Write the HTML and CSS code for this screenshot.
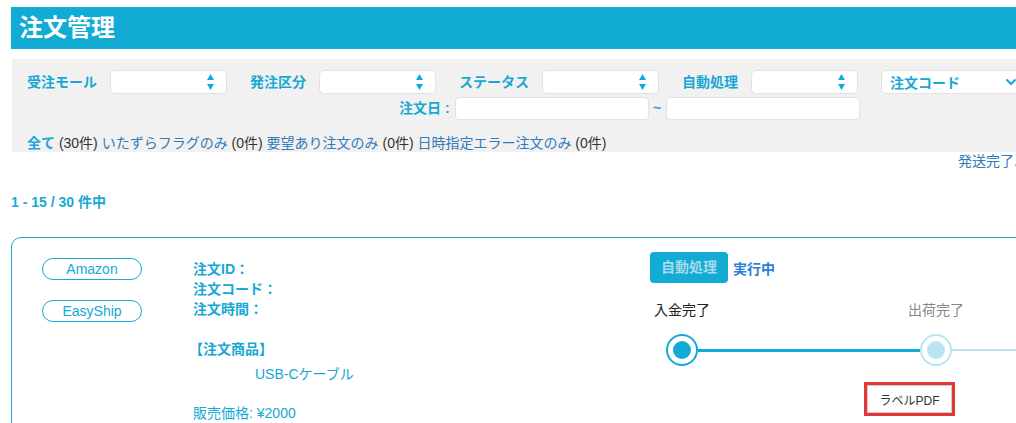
FILE: index.html
```html
<!DOCTYPE html>
<html lang="ja">
<head>
    <meta charset="UTF-8">
    <meta name="viewport" content="width=device-width, initial-scale=1.0">
    <title>注文管理</title>
    <link rel="stylesheet" href="styles.css">
</head>
<body>
    <div class="page">
        <header class="page-header">
            <h1>注文管理</h1>
        </header>

        <section class="filter-panel">
            <div class="filter-row">
                <div class="filter-group">
                    <span class="filter-label">受注モール</span>
                    <div class="select-box">
                        <svg class="updown" width="7" height="16" viewBox="0 0 7 16"><path d="M3.5 0 L7 6 L0 6 Z M3.5 16 L7 10 L0 10 Z" fill="#12abd4"/></svg>
                    </div>
                </div>
                <div class="filter-group">
                    <span class="filter-label">発注区分</span>
                    <div class="select-box">
                        <svg class="updown" width="7" height="16" viewBox="0 0 7 16"><path d="M3.5 0 L7 6 L0 6 Z M3.5 16 L7 10 L0 10 Z" fill="#12abd4"/></svg>
                    </div>
                </div>
                <div class="filter-group">
                    <span class="filter-label">ステータス</span>
                    <div class="select-box">
                        <svg class="updown" width="7" height="16" viewBox="0 0 7 16"><path d="M3.5 0 L7 6 L0 6 Z M3.5 16 L7 10 L0 10 Z" fill="#12abd4"/></svg>
                    </div>
                </div>
                <div class="filter-group">
                    <span class="filter-label">自動処理</span>
                    <div class="select-box narrow">
                        <svg class="updown" width="7" height="16" viewBox="0 0 7 16"><path d="M3.5 0 L7 6 L0 6 Z M3.5 16 L7 10 L0 10 Z" fill="#12abd4"/></svg>
                    </div>
                </div>
                <div class="select-box code-select">
                    <span>注文コード</span>
                    <svg width="12" height="8" viewBox="0 0 12 8"><path d="M1.5 1.5 L6 6 L10.5 1.5" fill="none" stroke="#12abd4" stroke-width="2"/></svg>
                </div>
            </div>

            <div class="date-row">
                <span class="filter-label">注文日 :</span>
                <div class="text-box"></div>
                <span class="tilde">~</span>
                <div class="text-box"></div>
            </div>

            <div class="quick-filters">
                <a class="active">全て</a> (30件)
                <a>いたずらフラグのみ</a> (0件)
                <a>要望あり注文のみ</a> (0件)
                <a>日時指定エラー注文のみ</a> (0件)
            </div>
        </section>

        <div class="bulk-row">
            <a>発送完了...</a>
        </div>

        <div class="result-count">1 - 15 / 30 件中</div>

        <div class="order-card">
            <div class="card-tags">
                <span class="pill">Amazon</span>
                <span class="pill">EasyShip</span>
            </div>

            <div class="card-info">
                <div class="info-line">注文ID：</div>
                <div class="info-line">注文コード：</div>
                <div class="info-line">注文時間：</div>
                <div class="items-title">【注文商品】</div>
                <div class="item-name">USB-Cケーブル</div>
                <div class="price">販売価格: ¥2000</div>
            </div>

            <div class="card-status">
                <div class="auto-row">
                    <span class="auto-badge">自動処理</span>
                    <span class="auto-state">実行中</span>
                </div>
                <div class="step-labels">
                    <span class="step-label done">入金完了</span>
                    <span class="step-label">出荷完了</span>
                </div>
                <div class="step-track">
                    <span class="step-dot done"></span>
                    <span class="step-line done"></span>
                    <span class="step-dot"></span>
                    <span class="step-line"></span>
                </div>
                <div class="label-row">
                    <span class="label-frame"><button class="label-btn">ラベルPDF</button></span>
                </div>
            </div>
        </div>
    </div>
</body>
</html>
```

FILE: styles.css
```css
* {
    box-sizing: border-box;
    margin: 0;
    padding: 0;
}

body {
    font-family: "Liberation Sans", "Noto Sans CJK JP", sans-serif;
    font-size: 14px;
    color: #333;
    background-color: #fff;
    overflow: hidden;
}

a {
    color: #337ab7;
    cursor: pointer;
}

.page {
    width: 1090px;
    padding: 7px 0 0 11px;
}

.page-header {
    height: 42px;
    background-color: #12abd4;
    padding-left: 8px;
}

.page-header h1 {
    color: #fff;
    font-size: 24px;
    line-height: 42px;
    font-weight: bold;
}

/* filters */
.filter-panel {
    margin: 10px 0 0 1px;
    height: 93px;
    background-color: #f1f1f1;
    padding: 11px 0 0 15px;
}

.filter-row {
    display: flex;
    align-items: center;
    gap: 23px;
}

.filter-group {
    display: flex;
    align-items: center;
}

.filter-label {
    color: #17a8d4;
    font-weight: bold;
    margin-right: 13px;
    line-height: 24px;
}

.select-box {
    width: 117px;
    height: 24px;
    background-color: #fff;
    border: 1px solid #e2e2e2;
    border-radius: 5px;
    display: flex;
    align-items: center;
    justify-content: flex-end;
    padding-right: 12px;
}

.select-box.narrow {
    width: 107px;
}

.code-select {
    width: 145px;
    justify-content: space-between;
    padding: 0 8px;
    color: #17a8d4;
    font-weight: bold;
}

.date-row {
    display: flex;
    align-items: center;
    margin: 2px 0 0 372px;
}

.date-row .filter-label {
    margin-right: 5px;
}

.text-box {
    width: 194px;
    height: 23px;
    background-color: #fff;
    border: 1px solid #e2e2e2;
    border-radius: 4px;
}

.tilde {
    color: #17a8d4;
    font-weight: bold;
    width: 17px;
    text-align: center;
}

.quick-filters {
    margin-top: 14px;
    line-height: 18px;
}

.quick-filters .active {
    color: #17a8d4;
    font-weight: bold;
}

.bulk-row {
    padding-left: 947px;
    line-height: 18px;
    white-space: nowrap;
}

.result-count {
    margin-top: 23px;
    color: #17a8d4;
    font-weight: bold;
    font-size: 14px;
    line-height: 18px;
}

/* order card */
.order-card {
    margin-top: 26px;
    height: 220px;
    border: 1px solid #17a8d4;
    border-radius: 10px;
    display: flex;
    padding: 14px 0 0 30px;
}

.card-tags {
    width: 151px;
    padding-top: 6px;
    display: flex;
    flex-direction: column;
    align-items: flex-start;
    gap: 20px;
}

.pill {
    width: 100px;
    height: 22px;
    border: 1px solid #17a8d4;
    border-radius: 11px;
    color: #17a8d4;
    text-align: center;
    line-height: 20px;
    font-size: 14px;
}

.card-info {
    width: 457px;
    padding-top: 7px;
    color: #17a8d4;
}

.info-line {
    font-weight: bold;
    line-height: 20px;
}

.items-title {
    margin-top: 20px;
    font-weight: bold;
    line-height: 20px;
    margin-left: -4px;
}

.item-name {
    margin-top: 5px;
    padding-left: 62px;
    line-height: 20px;
}

.price {
    margin-top: 19px;
    line-height: 20px;
}

.card-status {
    flex: 1;
}

.auto-row {
    display: flex;
    align-items: center;
    gap: 5px;
}

.auto-badge {
    width: 78px;
    height: 31px;
    background-color: #12abd4;
    border-radius: 4px;
    color: #a6dbec;
    font-weight: bold;
    text-align: center;
    line-height: 31px;
}

.auto-state {
    color: #2b7fd4;
    font-weight: bold;
}

.step-labels {
    display: flex;
    gap: 190px;
    margin-top: 17px;
}

.step-label {
    width: 64px;
    text-align: center;
    line-height: 20px;
    color: #888;
}

.step-label.done {
    color: #222;
}

.step-track {
    display: flex;
    align-items: center;
    margin-top: 14px;
    padding-left: 16px;
}

.step-dot {
    width: 32px;
    height: 32px;
    border-radius: 50%;
    border: 2px solid #b9e5f1;
    display: flex;
    align-items: center;
    justify-content: center;
    flex-shrink: 0;
}

.step-dot::after {
    content: "";
    width: 18px;
    height: 18px;
    border-radius: 50%;
    background-color: #b9e5f1;
}

.step-dot.done {
    border-color: #12abd4;
}

.step-dot.done::after {
    background-color: #12abd4;
}

.step-line {
    flex: 1;
    height: 2px;
    background-color: #b9e5f1;
}

.step-line.done {
    flex: 0 0 222px;
    height: 3px;
    background-color: #12abd4;
}

.label-row {
    margin-top: 16px;
    padding-left: 214px;
}

.label-frame {
    display: inline-block;
    border: 3px solid #e53535;
}

.label-btn {
    display: block;
    width: 85px;
    height: 28px;
    background-color: #fff;
    border: 1px solid #ccc;
    font-family: inherit;
    font-size: 12px;
    color: #333;
}
```
